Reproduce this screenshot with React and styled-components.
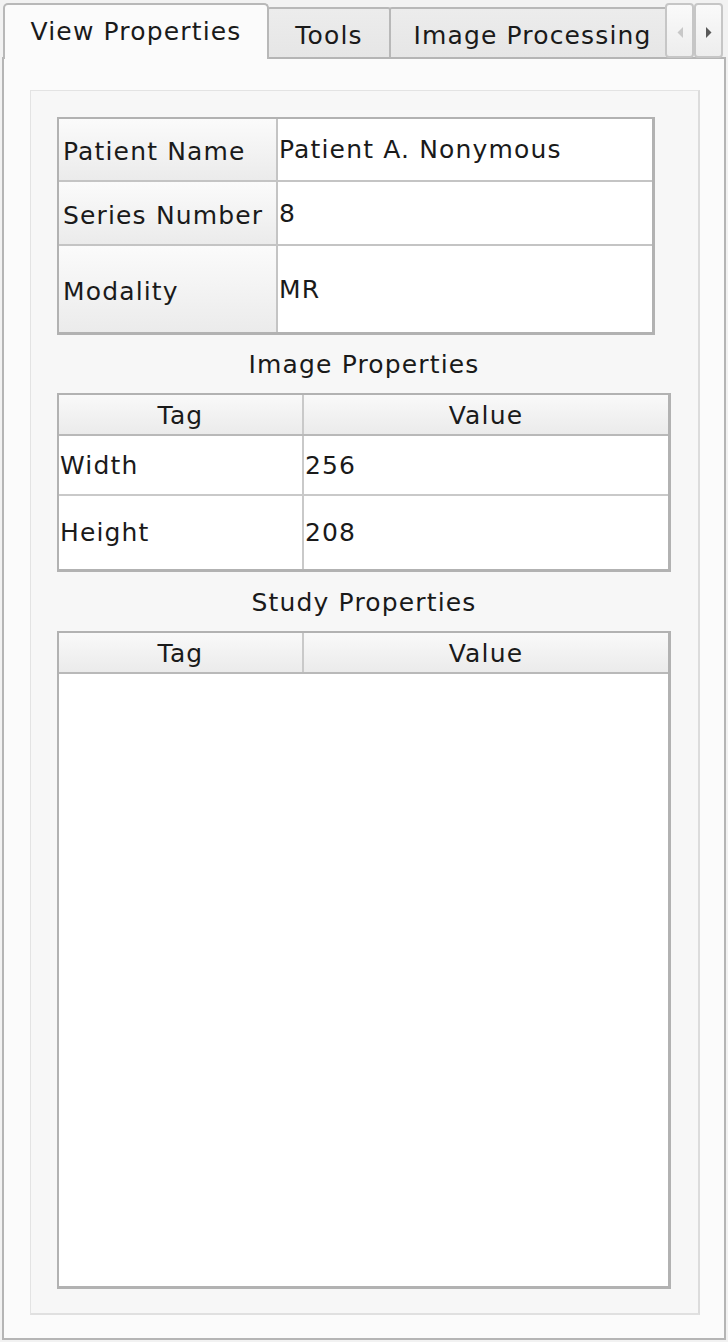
import React from 'react';
import styled, { createGlobalStyle, css } from 'styled-components';

const Global = createGlobalStyle`
  html, body { margin: 0; padding: 0; background: #f2f2f2; }
  * { box-sizing: border-box; }
`;

const Window = styled.div`
  height: 1342px;
  padding: 3px 2px 2px 2px;
  display: flex;
  flex-direction: column;
  font-family: "DejaVu Sans", "Liberation Sans", sans-serif;
  font-size: 25px;
  letter-spacing: 1.15px;
  color: #1a1a1a;
`;

const TabBar = styled.div`
  display: flex;
  height: 56px;
  margin-bottom: -2px;
  padding-right: 3px;
  position: relative;
  z-index: 1;
`;

const TabStrip = styled.div`
  flex: 1;
  min-width: 0;
  display: flex;
  overflow: hidden;
  padding-left: 1px;
`;

const Tab = styled.div`
  flex: none;
  width: ${p => p.$w}px;
  display: flex;
  align-items: center;
  justify-content: center;
  white-space: nowrap;
  border: 2px solid #b8b8b8;
  border-bottom: none;
  ${p => p.$active
    ? css`
      height: 56px;
      background: #fbfbfb;
      border-radius: 5px 5px 0 0;
      padding-bottom: 1px;
    `
    : css`
      height: 50px;
      margin-top: 4px;
      margin-left: -2px;
      background: linear-gradient(#ececec, #e6e6e6);
      border-radius: 3px 3px 0 0;
      padding-top: 4px;
    `}
`;

const ScrollButton = styled.div`
  flex: none;
  width: 29px;
  height: 55px;
  display: flex;
  align-items: center;
  justify-content: center;
  padding-top: 3px;
  border: 2px solid #c6c6c6;
  border-radius: 4px;
  background: linear-gradient(#fafafa, #ededed);
`;

const Pane = styled.div`
  flex: 1;
  display: flex;
  flex-direction: column;
  border: 2px solid #b5b5b5;
  background: #fbfbfb;
  padding: 31px 24px 23px 26px;
`;

const Group = styled.div`
  flex: 1;
  display: flex;
  flex-direction: column;
  background: #f7f7f7;
  border: 1px solid #e3e3e3;
  border-right: 2px solid #dcdcdc;
  border-bottom: 2px solid #e0e0e0;
  padding: 26px 27px 24px 26px;
`;

const InfoTable = styled.div`
  width: 598px;
  display: grid;
  grid-template-columns: 217px 1fr;
  grid-template-rows: 61px 62px 86px;
  gap: 2px;
  background: #c4c4c4;
  border: 2px solid #b2b2b2;
  border-right-width: 3px;
  border-bottom-width: 3px;
`;

const RowHeader = styled.div`
  display: flex;
  align-items: center;
  padding: 4px 0 0 4px;
  white-space: nowrap;
  background: linear-gradient(#fbfbfb, #ebebeb);
`;

const Cell = styled.div`
  display: flex;
  align-items: center;
  padding-left: 1px;
  white-space: nowrap;
  background: #ffffff;
`;

const SectionTitle = styled.div`
  text-align: center;
  line-height: 30px;
  margin: ${p => p.$top}px 0 13px;
`;

const DataTable = styled.div`
  display: flex;
  flex-direction: column;
  border: 2px solid #b2b2b2;
  border-right-width: 3px;
  border-bottom-width: 3px;
  background: #ffffff;
  ${p => p.$grow && css`flex: 1;`}
`;

const HeaderRow = styled.div`
  display: grid;
  grid-template-columns: 243px 1fr;
  gap: 2px;
  height: 41px;
  background: #c9c9c9;
  border-bottom: 2px solid #b9b9b9;
`;

const ColumnHeader = styled.div`
  display: flex;
  align-items: center;
  justify-content: center;
  padding-top: 2px;
  background: linear-gradient(#f9f9f9, #ebebeb);
`;

const BodyRow = styled.div`
  display: grid;
  grid-template-columns: 243px 1fr;
  gap: 2px;
  height: ${p => p.$h}px;
  background: #c9c9c9;
  & + & { border-top: 2px solid #c9c9c9; }
`;

const Arrow = ({ dir, color }) => (
  <svg width="6" height="11" viewBox="0 0 6 11">
    <path d={dir === 'left' ? 'M6 0 L0.5 5.5 L6 11 Z' : 'M0 0 L5.5 5.5 L0 11 Z'} fill={color} />
  </svg>
);

const info = [
  ['Patient Name', 'Patient A. Nonymous'],
  ['Series Number', '8'],
  ['Modality', 'MR'],
];

const imageProps = [
  ['Width', '256', 58],
  ['Height', '208', 75],
];

export default function App() {
  return (
    <>
      <Global />
      <Window>
        <TabBar>
          <TabStrip>
            <Tab $active $w={266}>View Properties</Tab>
            <Tab $w={124}>Tools</Tab>
            <Tab $w={287}>Image Processing</Tab>
          </TabStrip>
          <ScrollButton><Arrow dir="left" color="#c8c8c8" /></ScrollButton>
          <ScrollButton><Arrow dir="right" color="#595959" /></ScrollButton>
        </TabBar>
        <Pane>
          <Group>
            <InfoTable>
              {info.map(([k, v]) => (
                <React.Fragment key={k}>
                  <RowHeader>{k}</RowHeader>
                  <Cell>{v}</Cell>
                </React.Fragment>
              ))}
            </InfoTable>

            <SectionTitle $top={15}>Image Properties</SectionTitle>
            <DataTable>
              <HeaderRow>
                <ColumnHeader>Tag</ColumnHeader>
                <ColumnHeader>Value</ColumnHeader>
              </HeaderRow>
              {imageProps.map(([k, v, h]) => (
                <BodyRow key={k} $h={h}>
                  <Cell>{k}</Cell>
                  <Cell>{v}</Cell>
                </BodyRow>
              ))}
            </DataTable>

            <SectionTitle $top={16}>Study Properties</SectionTitle>
            <DataTable $grow>
              <HeaderRow>
                <ColumnHeader>Tag</ColumnHeader>
                <ColumnHeader>Value</ColumnHeader>
              </HeaderRow>
            </DataTable>
          </Group>
        </Pane>
      </Window>
    </>
  );
}
